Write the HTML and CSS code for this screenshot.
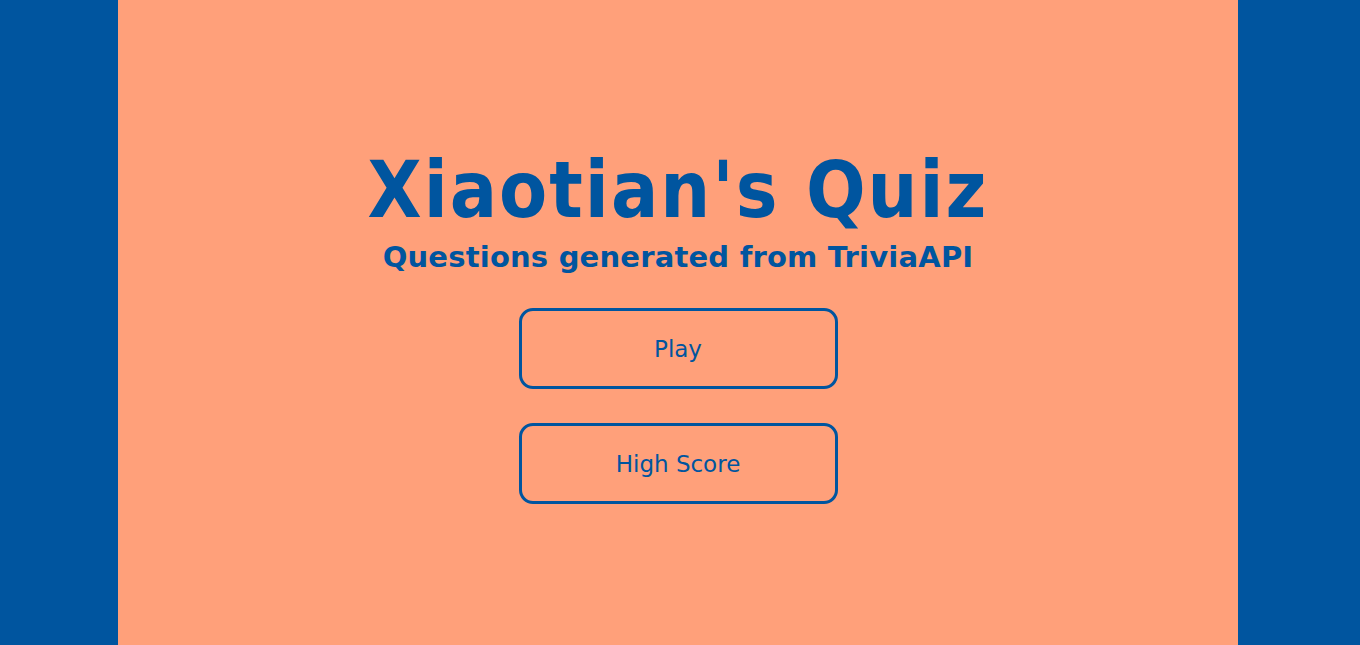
FILE: index.html
```html
<!DOCTYPE html>
<html>
<head>
<meta charset="utf-8">
<link rel="stylesheet" href="styles.css">
</head>
<body>
<div class="page">
  <main class="main">
    <h1 class="title">Xiaotian's Quiz</h1>
    <h2 class="subtitle">Questions generated from TriviaAPI</h2>
    <div class="buttons">
      <button class="btn">Play</button>
      <button class="btn">High Score</button>
    </div>
  </main>
</div>
</body>
</html>
```
FILE: styles.css
```css
html, body {
  margin: 0;
  height: 100%;
}
body {
  background: #00559f;
  font-family: "DejaVu Sans", sans-serif;
  color: #00559f;
}
.page {
  display: grid;
  grid-template-columns: 118px 1120px 1fr;
  height: 645px;
}
.main {
  grid-column: 2;
  background: #ffa07a;
  display: flex;
  flex-direction: column;
  align-items: center;
  padding-top: 148px;
}
.title {
  margin: 0;
  font-family: "DejaVu Sans Condensed", "DejaVu Sans", sans-serif;
  font-size: 78px;
  font-weight: bold;
  line-height: 84px;
  letter-spacing: 2px;
}
.subtitle {
  margin: 0;
  font-size: 29px;
  font-weight: bold;
  line-height: 38px;
  letter-spacing: 0.2px;
  padding-top: 6px;
}
.buttons {
  display: flex;
  flex-direction: column;
  gap: 34px;
  margin-top: 32px;
}
.btn {
  width: 319px;
  height: 81px;
  background: transparent;
  border: 3px solid #00559f;
  border-radius: 14px;
  color: #00559f;
  font-family: "DejaVu Sans", sans-serif;
  font-size: 23px;
  padding: 0;
}
```
